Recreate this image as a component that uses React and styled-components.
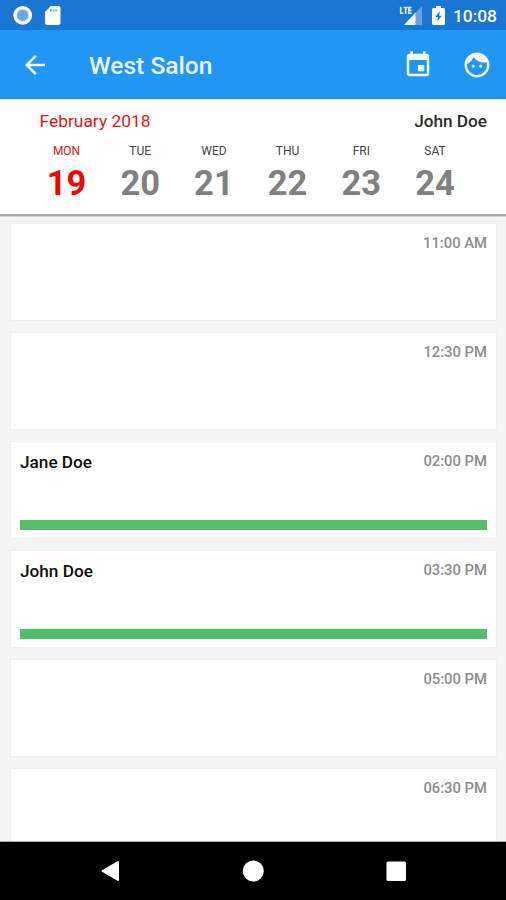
import React from "react";
import styled, { createGlobalStyle } from "styled-components";

const GlobalStyle = createGlobalStyle`
  * { box-sizing: border-box; }
  html, body { margin: 0; padding: 0; }
  body { font-family: Roboto, "Noto Sans", sans-serif; overflow: hidden; }
  svg { display: block; flex: none; }
`;

const Screen = styled.div`
  width: 506px;
  height: 900px;
  display: flex;
  flex-direction: column;
  overflow: hidden;
  background: #f5f5f5;
`;

const StatusBar = styled.div`
  flex: none;
  height: 30px;
  display: flex;
  align-items: center;
  justify-content: space-between;
  padding: 0 9px 0 13px;
  background: #1976d2;
  color: #fff;
`;

const StatusGroup = styled.div`
  display: flex;
  align-items: center;
  gap: ${(p) => p.$gap}px;
`;

const Clock = styled.span`
  font-size: 17.4px;
  font-weight: 500;
  line-height: 30px;
  margin-left: -1px;
  padding-top: 1px;
`;

const Toolbar = styled.header`
  flex: none;
  height: 69px;
  display: flex;
  align-items: center;
  padding: 1px 14px 0 20px;
  background: #2196f3;
  border-bottom: 1px solid #1f8fe8;
  color: #fff;
`;

const Title = styled.h1`
  flex: 1;
  margin: 2px 0 0 39px;
  font-size: 24.6px;
  line-height: 30px;
  font-weight: 500;
  color: #e9f4fe;
`;

const Actions = styled.div`
  display: flex;
  gap: 29px;
`;

const Calendar = styled.section`
  flex: none;
  height: 118px;
  background: #fff;
  border-top: 1px solid #eeeeee;
  box-shadow: inset 0 -1px 0 #d4d4d4, inset 0 -3px 0 #a4a4a4;
`;

const CalendarHead = styled.div`
  display: flex;
  justify-content: space-between;
  padding: 11px 19px 0 39.5px;
  line-height: 21px;
`;

const Month = styled.span`
  font-size: 17.4px;
  color: #e31616;
`;

const Employee = styled.span`
  font-size: 17.2px;
  font-weight: 500;
  color: #2b2b2b;
`;

const Days = styled.div`
  display: grid;
  grid-template-columns: repeat(6, 73.7px);
  padding-left: 29.700px;
`;

const Day = styled.div`
  display: flex;
  flex-direction: column;
  align-items: center;
`;

const DayName = styled.span`
  margin-top: 12px;
  font-size: 12px;
  line-height: 14px;
  color: ${(p) => (p.$active ? "#e31616" : "#424242")};
`;

const DayNumber = styled.span`
  margin-top: 5px;
  font-size: 34.5px;
  line-height: 40px;
  font-weight: 700;
  color: ${(p) => (p.$active ? "#ed0808" : "#808080")};
`;

const Slots = styled.main`
  flex: 1;
  min-height: 0;
  overflow: hidden;
  display: flex;
  flex-direction: column;
  gap: 11px;
  padding: 6px 9px 0 10px;
  border-bottom: 1px solid #a8a8a8;
`;

const Slot = styled.article`
  flex: none;
  height: 98px;
  display: flex;
  flex-direction: column;
  justify-content: space-between;
  padding: 9px 9px 8px;
  background: #fff;
  border: 1px solid #efefef;
`;

const SlotHead = styled.div`
  display: flex;
  justify-content: space-between;
`;

const Client = styled.span`
  padding-top: 1px;
  font-size: 17.2px;
  line-height: 20px;
  font-weight: 500;
  color: #0c0c0c;
`;

const Time = styled.span`
  font-size: 14.8px;
  line-height: 20px;
  font-weight: 500;
  color: #8c8c8c;
`;

const BookedBar = styled.div`
  height: 10px;
  background: #53bd67;
`;

const NavBar = styled.nav`
  flex: none;
  height: 58px;
  display: flex;
  justify-content: center;
  gap: 119px;
  padding-top: 17px;
  background: #000;
`;

const days = [
  ["MON", 19], ["TUE", 20], ["WED", 21], ["THU", 22], ["FRI", 23], ["SAT", 24],
];

const slots = [
  { time: "11:00 AM" },
  { time: "12:30 PM" },
  { time: "02:00 PM", client: "Jane Doe" },
  { time: "03:30 PM", client: "John Doe" },
  { time: "05:00 PM" },
  { time: "06:30 PM" },
];

const Icon = ({ d }) => (
  <svg width="30" height="30" viewBox="0 0 24 24" fill="#f4faff"><path d={d} /></svg>
);

const BACK = "M20 11H7.83l5.59-5.59L12 4l-8 8 8 8 1.41-1.41L7.83 13H20v-2z";
const EVENT = "M17 12h-5v5h5v-5zM16 1v2H8V1H6v2H5c-1.11 0-1.99.9-1.99 2L3 19c0 1.1.89 2 2 2h14c1.1 0 2-.9 2-2V5c0-1.1-.9-2-2-2h-1V1h-2zm3 18H5V8h14v11z";
const FACE = "M9 11.75c-.69 0-1.25.56-1.25 1.25s.56 1.25 1.25 1.25 1.25-.56 1.25-1.25-.56-1.25-1.25-1.25zm6 0c-.69 0-1.25.56-1.25 1.25s.56 1.25 1.25 1.25 1.25-.56 1.25-1.25-.56-1.25-1.25-1.25zM12 2C6.48 2 2 6.48 2 12s4.48 10 10 10 10-4.48 10-10S17.52 2 12 2zm0 18c-4.41 0-8-3.59-8-8 0-.29.02-.58.05-.86 2.36-1.05 4.23-2.98 5.21-5.37C11.07 8.33 14.05 10 17.42 10c.78 0 1.53-.09 2.25-.26.21.71.33 1.47.33 2.26 0 4.41-3.59 8-8 8z";

const SyncIcon = () => (
  <svg width="20" height="20" viewBox="0 0 20 20">
    <circle cx="9.700" cy="10.3" r="7.7" fill="#80b0e6" stroke="#fff" strokeWidth="3.4" />
    <circle cx="9.700" cy="10.3" r="4.6" fill="#6fa6e2" />
  </svg>
);

const SdCardIcon = () => (
  <svg width="16" height="20" viewBox="0 0 16 20">
    <path d="M5.8 1h7.700a2 2 0 0 1 2 2v15a2 2 0 0 1-2 2H2a2 2 0 0 1-2-2V7z" fill="#fff" />
    <path d="M5 4.200h2.200v2.300H5zM8.200 4.200h1.300v2.300H8.200zM10.400 4.200h1.400v2.300h-1.400z" fill="#6d9fd7" />
  </svg>
);

const SignalIcon = () => (
  <svg width="24" height="20" viewBox="0 0 24 20">
    <path d="M23 1v19H5z" fill="#68a1de" />
    <path d="M16.500 7.800V20H5z" fill="#fff" />
    <path d="M0 1h13v9H0z" fill="#1976d2" />
    <path d="M1.700 1.800v6.500h2.600M4.600 2.500h4.200M6.700 2.500v6.500M12.700 2.500H9.900v5.800h2.800M9.900 5.400h2.500" fill="none" stroke="#e5effa" strokeWidth="1.600" />
  </svg>
);

const BatteryIcon = () => (
  <svg width="13" height="20" viewBox="0 0 13 20">
    <path d="M4 1h5v2h2.500A1.500 1.500 0 0 1 13 4.500V18.500A1.500 1.500 0 0 1 11.500 20h-10A1.500 1.500 0 0 1 0 18.500V4.500A1.500 1.500 0 0 1 1.500 3H4z" fill="#fff" />
    <path d="M7.800 6L3.400 12h2.600l-.8 4.500L9.800 10.800H7.200z" fill="#1976d2" />
  </svg>
);

export default function App() {
  return (
    <>
      <GlobalStyle />
      <Screen>
        <StatusBar>
          <StatusGroup $gap={11.5}>
            <SyncIcon />
            <SdCardIcon />
          </StatusGroup>
          <StatusGroup $gap={9}>
            <SignalIcon />
            <BatteryIcon />
            <Clock>10:08</Clock>
          </StatusGroup>
        </StatusBar>
        <Toolbar>
          <Icon d={BACK} />
          <Title>West Salon</Title>
          <Actions>
            <Icon d={EVENT} />
            <Icon d={FACE} />
          </Actions>
        </Toolbar>
        <Calendar>
          <CalendarHead>
            <Month>February 2018</Month>
            <Employee>John Doe</Employee>
          </CalendarHead>
          <Days>
            {days.map(([name, number], i) => (
              <Day key={name}>
                <DayName $active={i === 0}>{name}</DayName>
                <DayNumber $active={i === 0}>{number}</DayNumber>
              </Day>
            ))}
          </Days>
        </Calendar>
        <Slots>
          {slots.map(({ time, client }) => (
            <Slot key={time}>
              <SlotHead>
                <Client>{client}</Client>
                <Time>{time}</Time>
              </SlotHead>
              {client && <BookedBar />}
            </Slot>
          ))}
        </Slots>
        <NavBar>
          <svg width="24" height="24" viewBox="0 0 24 24">
            <path d="M20 3v18L4.500 12z" fill="#fff" stroke="#fff" strokeWidth="2" strokeLinejoin="round" />
          </svg>
          <svg width="24" height="24" viewBox="0 0 24 24">
            <circle cx="12.300" cy="12" r="10.500" fill="#fff" />
          </svg>
          <svg width="24" height="24" viewBox="0 0 24 24">
            <rect x="2.500" y="2.500" width="19.500" height="19.500" rx="1.500" fill="#fff" />
          </svg>
        </NavBar>
      </Screen>
    </>
  );
}
